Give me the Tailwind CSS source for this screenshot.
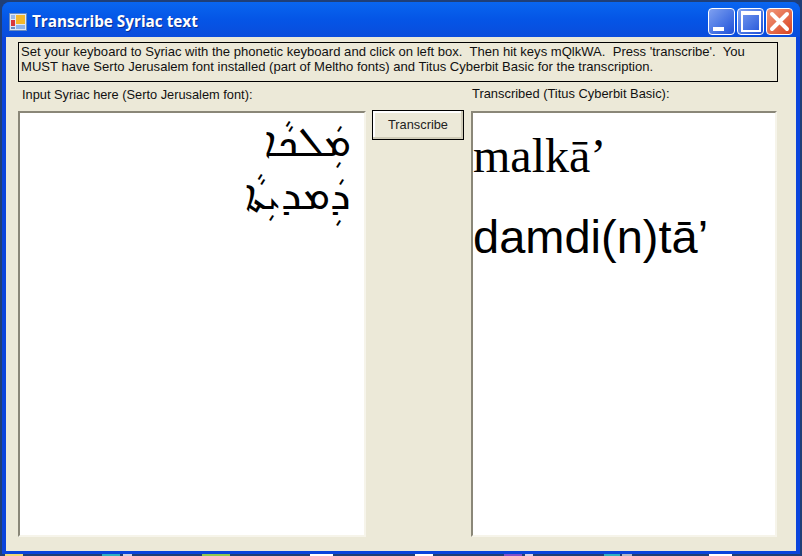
<!DOCTYPE html>
<html lang="en">
<head>
<meta charset="UTF-8">
<title>Transcribe Syriac text</title>
<script src="https://cdn.jsdelivr.net/npm/@tailwindcss/browser@4"></script>
</head>
<body class="w-[802px] h-[556px] overflow-hidden bg-[#1f3f78] font-['Liberation_Sans',sans-serif] pt-[2px]">
  <!-- window -->
  <div class="w-[798px] h-[552px] ml-[2px] flex flex-col rounded-t-[8px] bg-[#0a44dc] overflow-hidden">
    <!-- title bar -->
    <div class="h-[35px] shrink-0 flex items-center pt-[4px] pl-[7px] pr-[7px] bg-gradient-to-b from-[#0a66f0] via-[#0555e6] to-[#0a4cdc]">
      <svg class="w-[18px] h-[18px]" viewBox="0 0 18 18">
        <rect x="0.5" y="0.5" width="17" height="17" fill="#dfe8f6" stroke="#6a8cc0"/>
        <rect x="2" y="2" width="4" height="4" fill="#9db8e4"/>
        <rect x="7" y="2" width="9" height="9" fill="#f5b82a"/>
        <rect x="2" y="7" width="4" height="6" fill="#d8383a"/>
        <rect x="7" y="12" width="9" height="4" fill="#8fb4ec"/>
        <rect x="2" y="14" width="4" height="2" fill="#6a8cc0"/>
      </svg>
      <span class="ml-[5px] text-white font-bold text-[15.3px] font-['Open_Sans',sans-serif] [text-shadow:1px_1px_0_#0a2f90]">Transcribe Syriac text</span>
      <div class="ml-auto flex gap-[2px]">
        <button class="w-[27px] h-[27px] rounded-[4px] border border-white bg-gradient-to-br from-[#7fa0f0] to-[#1f4fd8] flex items-end pl-[4px] pb-[3px]">
          <span class="block w-[11px] h-[4px] bg-white"></span>
        </button>
        <button class="w-[27px] h-[27px] rounded-[4px] border border-white bg-gradient-to-br from-[#7fa0f0] to-[#1f4fd8] flex items-center justify-center">
          <span class="block w-[20px] h-[21px] border-2 border-t-[4px] border-white"></span>
        </button>
        <button class="w-[27px] h-[27px] rounded-[4px] border border-white bg-gradient-to-br from-[#f0987a] to-[#d8401c] flex items-center justify-center">
          <svg class="w-[21px] h-[21px]" viewBox="0 0 21 21"><path d="M3 3 L18 18 M18 3 L3 18" stroke="#fff" stroke-width="4" stroke-linecap="round"/></svg>
        </button>
      </div>
    </div>
    <!-- client area -->
    <div class="flex-1 mx-[4px] mb-[3px] bg-[#ece9d8] pl-[12px] pr-[18px] pt-[5px] flex flex-col text-[#111]">
      <div class="h-[40px] border border-black px-[2px] text-[13.07px] leading-[15px] pt-[1px]">
        Set your keyboard to Syriac with the phonetic keyboard and click on left box.&nbsp; Then hit keys mQlkWA.&nbsp; Press 'transcribe'.&nbsp; You MUST have Serto Jerusalem font installed (part of Meltho fonts) and Titus Cyberbit Basic for the transcription.
      </div>
      <div class="flex-1 flex mt-[5px] mb-[14px]">
        <div class="w-[348px] flex flex-col">
          <label class="h-[24px] pl-[4px] text-[12.8px] leading-[15px]">Input Syriac here (Serto Jerusalem font):</label>
          <div dir="rtl" class="flex-1 bg-white border-2 border-t-[#8a8778] border-l-[#8a8778] border-r-[#f6f4ea] border-b-[#f6f4ea] pr-[13px] text-[42px] leading-[53px] text-black font-['Noto_Sans',sans-serif]">
            <div>ܡܲܠܟܵܐ</div>
            <div>ܕܲܡܕܝܼܬܵܐ</div>
          </div>
        </div>
        <div class="w-[105px] pl-[6px] pt-[23px]">
          <button class="block w-[92px] h-[30px] border border-black bg-[#ece9d8] text-[12.8px] text-[#222] shadow-[inset_-2px_-2px_0_#d0ccb8,inset_2px_2px_0_#fff]">Transcribe</button>
        </div>
        <div class="flex-1 flex flex-col mr-[1px]">
          <label class="h-[24px] pl-[1px] text-[12.9px] leading-[13px]">Transcribed (Titus Cyberbit Basic):</label>
          <div class="flex-1 bg-white border-2 border-t-[#8a8778] border-l-[#8a8778] border-r-[#f6f4ea] border-b-[#f6f4ea] pt-[2px] text-[48px] leading-[81px] text-black font-['Liberation_Serif',serif]">
            <div class="h-[81px]">malkā’</div>
            <div class="font-['Liberation_Sans',sans-serif] text-[47px]">damdi(n)tā’</div>
          </div>
        </div>
      </div>
    </div>
  </div>
  <!-- bit of the desktop showing under the window -->
  <div class="h-[2px] flex">
    <span class="ml-[5px] w-[18px] bg-[#f0d878]"></span>
    <span class="ml-[79px] w-[18px] bg-[#30b0c0]"></span>
    <span class="ml-[3px] w-[9px] bg-[#d0d0e0]"></span>
    <span class="ml-[70px] w-[28px] bg-[#90c850]"></span>
    <span class="ml-[80px] w-[23px] bg-white"></span>
    <span class="ml-[82px] w-[18px] bg-white"></span>
    <span class="ml-[71px] w-[18px] bg-[#8050c8]"></span>
    <span class="ml-[3px] w-[8px] bg-[#d8d0e8]"></span>
    <span class="ml-[71px] w-[16px] bg-[#30b0c0]"></span>
    <span class="ml-[2px] w-[10px] bg-[#b0b8c8]"></span>
    <span class="ml-[77px] w-[23px] bg-white"></span>
  </div>
</body>
</html>
